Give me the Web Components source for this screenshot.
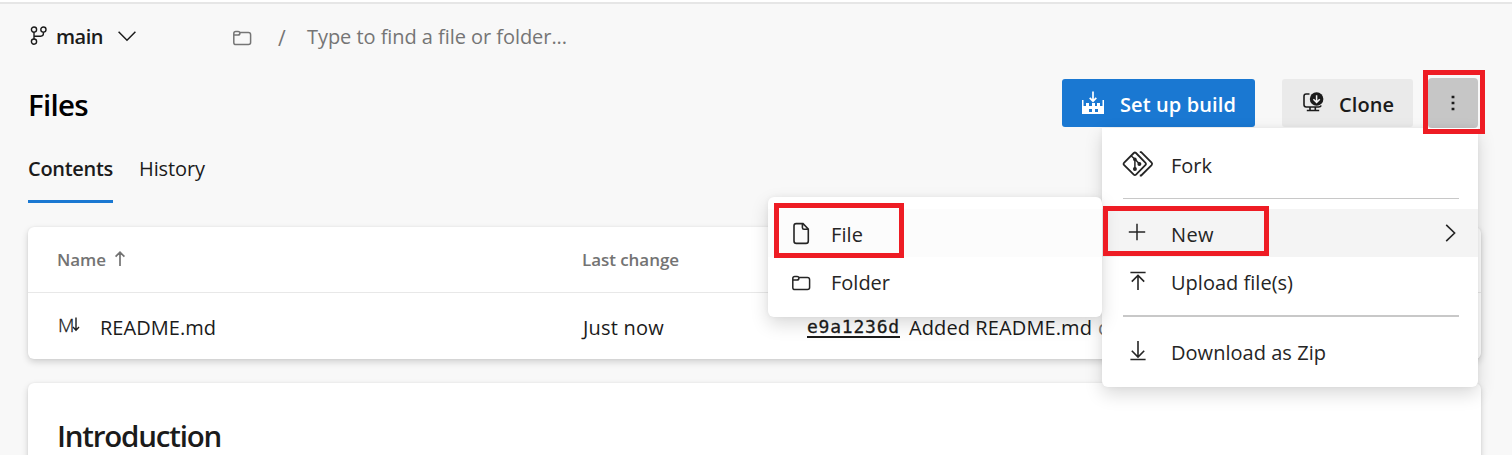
<!DOCTYPE html>
<html lang="en">
<head>
<meta charset="utf-8">
<title>Files</title>
<style>
html,body{margin:0;height:455px;overflow:hidden;background:#f8f8f8}
body{font-family:"Open Sans","Noto Sans",sans-serif;color:#1b1b1b}
</style>
</head>
<body>
<repo-page></repo-page>
<script>
const define = (name, html, init) => {
  const t = document.createElement('template');
  t.innerHTML = html;
  customElements.define(name, class extends HTMLElement {
    connectedCallback() {
      if (this.shadowRoot) return;
      this.attachShadow({mode: 'open'}).append(t.content.cloneNode(true));
      if (init) init.call(this, this.shadowRoot);
    }
  });
};

/* A single line of text; letter spacing is tuned so the line takes its "w" width. */
define('ui-text', `<style>:host{display:block;white-space:nowrap;flex:none}span{display:inline-block}</style><span><slot></slot></span>`,
  function (root) {
    const s = root.querySelector('span');
    const size = this.getAttribute('size') || '20';
    this.style.fontSize = size + 'px';
    this.style.lineHeight = '28px';
    if (this.hasAttribute('weight')) this.style.fontWeight = this.getAttribute('weight');
    const w = parseFloat(this.getAttribute('w'));
    if (w) {
      const natural = s.getBoundingClientRect().width;
      s.style.letterSpacing = ((w - natural) / this.textContent.length) + 'px';
      this.style.width = w + 'px';
    }
  });

const ICONS = {
  branch: [18, 20, '<circle cx="4" cy="3.6" r="2.6"/><circle cx="13.4" cy="3.6" r="2.6"/><circle cx="4" cy="15.6" r="2.6"/><path d="M4 6.2V13M13.4 6.2V7.6Q13.4 10.2 10.8 10.2H4"/>', 1.4],
  down: [18, 10, '<path d="M.6.8 9 9.2 17.4.8"/>', 1.5],
  folder: [20, 16, '<path d="M1.8 3.4Q1.8 1.4 3.8 1.4H6.2Q7.6 1.4 8 2.6H16.4Q18.6 2.6 18.6 4.8V12.6Q18.6 14.6 16.4 14.6H4Q1.8 14.6 1.8 12.4ZM1.8 5.1H6Q7.9 5.1 8 2.6"/>', 1.5],
  build: [24, 24, '<path d="M11 .5V9.8M7.7 6.9 11 10.2 14.3 6.9" stroke-width="1.7"/><path fill="currentColor" stroke="none" fill-rule="evenodd" d="M0 9H1.5V15H4V12H7V15H10V12H13V15H15V12H18V15H20.5V9H22V23H0ZM7 18V21H10V18ZM13 18V21H16V18Z"/>', 1.6],
  clone: [22, 22, '<path d="M7.5 3H4.2Q2 3 2 5.2V13.8Q2 16 4.2 16H16.6Q18.6 16 19.2 14.5M8 16V19M13.3 16V19M4.8 19.5H17.2"/><circle cx="14.6" cy="8" r="6.8" fill="currentColor" stroke="none"/><path d="M14.6 4.2V11.2M11.4 8.2 14.6 11.4 17.8 8.2" stroke="#f4f4f4" stroke-width="1.5"/>', 1.6],
  dots: [6, 18, '<path fill="currentColor" stroke="none" d="M1.6 1.7H4.4V4.3H1.6ZM1.6 7.7H4.4V10.3H1.6ZM1.6 13.7H4.4V16.3H1.6Z"/>', 1],
  fork: [32, 26, '<path d="M11.8 2Q12.9 1 14 2L23.3 11.6Q24.6 12.9 23.3 14.2L14 23.6Q12.9 24.7 11.8 23.6L2.2 14.2Q.9 12.9 2.2 11.6ZM17.8 1.2H19.2L29.6 11.7Q30.7 12.9 29.6 14.1L19.2 24.5H17.8"/><path d="M9 4.8 12.9 8.1V18M13 8.3 17.3 12.8" stroke-width="1.5"/><g fill="currentColor" stroke="none"><circle cx="12.9" cy="8.4" r="1.8"/><circle cx="12.9" cy="18" r="2"/><circle cx="17.4" cy="13" r="2"/></g>', 1.8],
  plus: [18, 18, '<path d="M9 .8V17.2M.8 9H17.2"/>', 1.5],
  upload: [18, 20, '<path d="M1.4 1.5H16.6M9 4.5V19M2.8 10.6 9 4.4 15.2 10.6"/>', 1.6],
  download: [18, 20, '<path d="M1.4 18.5H16.6M9 0V16M2.8 9.8 9 16 15.2 9.8"/>', 1.6],
  right: [11, 18, '<path d="M1.2.9 9.6 9 1.2 17.1"/>', 1.6],
  file: [18, 23, '<path d="M4.2 1.6H11L16.3 7V19Q16.3 21.4 14 21.4H4.4Q2 21.4 2 19V3.8Q2 1.6 4.2 1.6ZM10.4 1.8V5.6Q10.4 7.3 12 7.3H16"/>', 1.6],
  up: [12, 16, '<path d="M6 1.3V15M1.6 5.6 6 1.2 10.4 5.6"/>', 1.7],
  thindown: [8, 15, '<path d="M4 .5V13M1 10 4 13.2 7 10"/>', 1.4]
};
define('ui-icon', `<style>:host{display:block;flex:none}svg{display:block;overflow:visible}</style>`, function (root) {
  const [w, h, body, sw] = ICONS[this.getAttribute('name')];
  root.innerHTML += `<svg width="${w}" height="${h}" viewBox="0 0 ${w} ${h}" fill="none" stroke="currentColor" stroke-width="${sw}">${body}</svg>`;
});

define('ui-button', `<style>:host{display:flex;align-items:center;box-sizing:border-box;height:48px;border-radius:3px;background:#eaeaea;padding-left:20px}
:host([primary]){background:#1a78d2;color:#fff}:host([pressed]){background:#c6c6c6;height:50px;padding-left:22px;border-radius:4px}</style><slot></slot>`);

define('ui-tab', `<style>:host{display:block;box-sizing:border-box;height:48px;border-bottom:3px solid transparent}:host([active]){border-color:#1a78d2}</style><slot></slot>`);

define('ui-card', `<style>:host{display:block;background:#fff;border-radius:6px;box-shadow:0 3px 7px rgba(0,0,0,.16),0 0 2px rgba(0,0,0,.08)}</style><slot></slot>`);

define('menu-item', `<style>:host{display:flex;align-items:center;height:48px;padding-left:20px;box-sizing:border-box}
:host([hot]){background:var(--hot,#f4f4f4)}.i{width:32px;display:flex;justify-content:center;margin-right:17px}.e{margin-left:auto;margin-right:22px}
.t{padding-top:var(--drop,3px)}:host([sub]) .i{width:26px}</style><div class="i"><slot name="icon"></slot></div><div class="t"><slot></slot></div><div class="e"><slot name="end"></slot></div>`);

define('menu-line', `<style>:host{display:block;height:1px;background:#c8c8c8;margin:9px 19px 10px 21px}:host([thick]){height:2px;margin:10px 19px 11px 21px}</style>`);

define('ui-menu', `<style>:host{display:block;position:absolute;box-sizing:border-box;background:#fff;border-radius:0 0 6px 6px;color:#252525;box-shadow:0 7px 18px rgba(0,0,0,.15),0 0 5px rgba(0,0,0,.05)}:host([sub]){border-radius:6px}</style><slot></slot>`);

define('mark-box', `<style>:host{display:block;position:absolute;box-sizing:border-box;border:5px solid #ee1c24}</style>`);

define('file-table', `<style>
:host{display:block}
.r{display:grid;grid-template-columns:525px 225px 1fr;padding-left:29px;align-items:center}
.h{height:65px;border-bottom:1px solid #e8e8e8;color:#737373}
.b{height:66px;padding-top:3px;box-sizing:border-box}
.c{display:flex;align-items:center}
.m{font-size:19px;line-height:20px;width:14px;margin:-5px 0 0 1px;letter-spacing:-1px;font-weight:300;-webkit-text-stroke:.3px #1b1b1b}
.hash{font-family:"DejaVu Sans Mono",monospace;border-bottom:2px solid #1b1b1b;height:19px;margin-right:9px;-webkit-text-stroke:.3px #1b1b1b}
.hash ui-text{margin-top:-4px}
.g{color:#777;margin-left:6px}
</style>
<div class="r h"><div class="c"><ui-text size="17" weight="600" w="49">Name</ui-text><ui-icon name="up" style="margin:-2px 0 0 8px"></ui-icon></div><ui-text size="17" weight="600" w="97">Last change</ui-text><span></span></div>
<div class="r b"><div class="c"><span class="m">M</span><ui-icon name="thindown" style="margin:-6px 20px 0 0"></ui-icon><ui-text w="116">README.md</ui-text></div>
<ui-text w="81" style="margin-left:1px">Just now</ui-text>
<div class="c"><div class="hash"><ui-text size="18" w="93">e9a1236d</ui-text></div><ui-text w="183">Added README.md</ui-text><ui-text class="g">c</ui-text></div></div>`);

define('repo-page', `<style>
:host{display:block;position:relative;width:1512px;height:455px;overflow:hidden;background:#f8f8f8}
.top{height:2px;background:#fff;border-bottom:2px solid #e6e6e6}
.path{display:flex;align-items:center;height:64px;padding-left:30px}
.head{display:flex;align-items:center;height:74px;padding-left:28px}
.head .t{color:#000;margin-right:auto;margin-top:-1px}
.tabs{display:flex;gap:26px;padding:13px 0 0 28px}
ui-card{width:1453px;margin-left:28px}
.grey{color:#757575}
.intro{margin-top:24px;height:100px;padding:39px 0 0 29px;box-sizing:border-box}
</style>
<div class="top"></div>
<div class="path">
<ui-icon name="branch" style="margin-top:-1px"></ui-icon><ui-text weight="600" w="47" style="margin:2px 0 0 8px">main</ui-text><ui-icon name="down" style="margin:-1px 0 0 15px"></ui-icon>
<ui-icon class="grey" name="folder" style="margin:3px 0 0 95.5px"></ui-icon><ui-text class="grey" size="21" style="margin:4px 0 0 26.5px;width:29px">/</ui-text><ui-text class="grey" w="260" style="margin-top:2px">Type to find a file or folder...</ui-text>
</div>
<div class="head"><ui-text class="t" size="29.5" weight="600" w="60">Files</ui-text>
<ui-button primary style="width:193px;margin:-4px 27px 0 0"><ui-icon name="build" style="margin:-1px 14px 0 0"></ui-icon><ui-text weight="600" w="116" style="margin-top:3px">Set up build</ui-text></ui-button>
<ui-button style="width:131px;margin:-4px 15px 0 0"><ui-icon name="clone" style="margin:-3px 15px 0 0"></ui-icon><ui-text weight="600" w="55" style="margin-top:3px">Clone</ui-text></ui-button>
<ui-button pressed style="width:50px;margin:-4px 34px 0 0"><ui-icon name="dots"></ui-icon></ui-button></div>
<div class="tabs"><ui-tab active><ui-text weight="600" w="85">Contents</ui-text></ui-tab><ui-tab><ui-text w="66">History</ui-text></ui-tab></div>
<ui-card style="margin-top:24px;height:132px"><file-table></file-table></ui-card>
<ui-card class="intro"><ui-text size="29.5" weight="600" w="164">Introduction</ui-text></ui-card>

<ui-menu style="left:1102px;top:128px;width:376px;height:259px;padding-top:13px">
<menu-item style="--drop:2px"><ui-icon slot="icon" name="fork" style="margin-top:-2px"></ui-icon><ui-text w="41">Fork</ui-text></menu-item>
<menu-line></menu-line>
<menu-item hot><ui-icon slot="icon" name="plus" style="margin:-2px 0 0 -2px"></ui-icon><ui-text w="43">New</ui-text><ui-icon slot="end" name="right"></ui-icon></menu-item>
<menu-item><ui-icon slot="icon" name="upload"></ui-icon><ui-text w="122">Upload file(s)</ui-text></menu-item>
<menu-line thick></menu-line>
<menu-item style="--drop:2px"><ui-icon slot="icon" name="download" style="margin-top:-2px"></ui-icon><ui-text w="155">Download as Zip</ui-text></menu-item>
</ui-menu>
<ui-menu sub style="left:768px;top:197px;width:334px;height:120px;padding-top:12px;--hot:#fcfcfc">
<menu-item sub hot><ui-icon slot="icon" name="file"></ui-icon><ui-text w="32">File</ui-text></menu-item>
<menu-item sub><ui-icon slot="icon" name="folder" style="margin-top:3px"></ui-icon><ui-text w="59">Folder</ui-text></menu-item>
</ui-menu>
<mark-box style="left:1423px;top:70px;width:62px;height:64px"></mark-box>
<mark-box style="left:1103px;top:206px;width:166px;height:50px"></mark-box>
<mark-box style="left:774px;top:203px;width:130px;height:55px"></mark-box>`);
</script>
</body>
</html>
